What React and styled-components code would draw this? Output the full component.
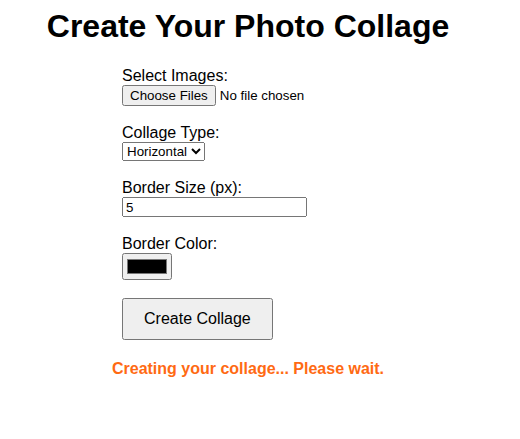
import React, { useState } from 'react';
import styled, { createGlobalStyle } from 'styled-components';

const GlobalStyle = createGlobalStyle`
  body {
    margin: 0;
    padding: 8px;
    font-family: "Liberation Sans", Arial, sans-serif;
    background: #fff;
    color: #000;
  }
`;

const Page = styled.div`
  width: 480px;
  text-align: center;
`;

const Title = styled.h1`
  font-size: 32px;
  font-weight: bold;
  margin: 0 0 22px;
`;

const Form = styled.form`
  width: 252px;
  margin: 0 auto;
  text-align: left;
`;

const Group = styled.div`
  margin-bottom: 18px;
`;

const Label = styled.label`
  display: block;
  font-size: 16px;
`;

const TextInput = styled.input`
  width: 185px;
  height: 20px;
  box-sizing: border-box;
  font-family: "Liberation Sans", Arial, sans-serif;
`;

const ColorInput = styled.input`
  width: 50px;
  height: 27px;
`;

const SubmitButton = styled.button`
  padding: 10px 20px;
  font-size: 16px;
  font-family: "Liberation Sans", Arial, sans-serif;
`;

const Status = styled.p`
  color: #ff6a13;
  font-weight: bold;
  font-size: 16px;
  margin: 20px 0 0;
`;

export default function App() {
  const [type, setType] = useState('horizontal');
  const [size, setSize] = useState('5');
  const [color, setColor] = useState('#000000');

  return (
    <Page>
      <GlobalStyle />
      <Title>Create Your Photo Collage</Title>
      <Form onSubmit={e => e.preventDefault()}>
        <Group>
          <Label htmlFor="images">Select Images:</Label>
          <input id="images" type="file" multiple accept="image/*" />
        </Group>
        <Group>
          <Label htmlFor="type">Collage Type:</Label>
          <select id="type" value={type} onChange={e => setType(e.target.value)}>
            <option value="horizontal">Horizontal</option>
            <option value="vertical">Vertical</option>
            <option value="grid">Grid</option>
          </select>
        </Group>
        <Group>
          <Label htmlFor="size">Border Size (px):</Label>
          <TextInput id="size" type="number" value={size} onChange={e => setSize(e.target.value)} />
        </Group>
        <Group>
          <Label htmlFor="color">Border Color:</Label>
          <ColorInput id="color" type="color" value={color} onChange={e => setColor(e.target.value)} />
        </Group>
        <SubmitButton type="submit">Create Collage</SubmitButton>
      </Form>
      <Status>Creating your collage... Please wait.</Status>
    </Page>
  );
}
